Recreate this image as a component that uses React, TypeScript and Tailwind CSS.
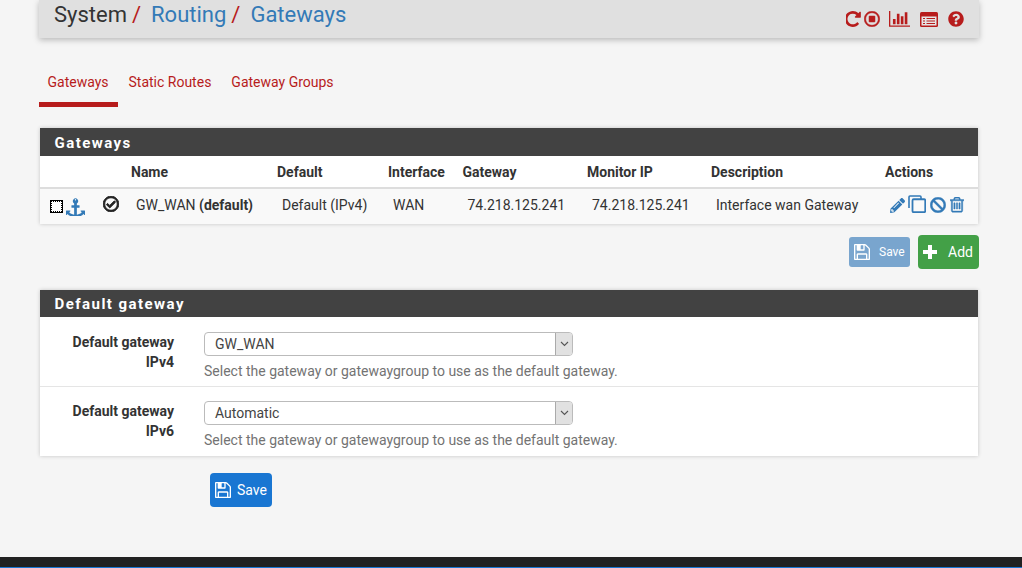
import { FaBan, FaPencilAlt, FaQuestionCircle, FaRegCheckCircle, FaRegStopCircle } from "react-icons/fa";

const cols = "grid grid-cols-[91px_146px_111px_74.5px_124.5px_124px_174px_94px]";

function RepeatIcon() {
  return (
    <svg width="15" height="16" viewBox="128 128 1408 1536" fill="currentColor">
      <path d="M1536 256v448q0 26-19 45t-45 19h-448q-42 0-59-40-17-39 14-69l138-138q-148-137-349-137-104 0-198.5 40.5t-163.5 109.5-109.5 163.5-40.5 198.5 40.5 198.5 109.5 163.5 163.5 109.5 198.5 40.5q119 0 225-52t179-147q7-10 23-12 15 0 25 9l137 138q9 8 9.5 20.5t-7.5 22.5q-109 132-264 204.5t-327 72.5q-156 0-298-61t-245-164-164-245-61-298 61-298 164-245 245-164 298-61q147 0 284.5 55.5t244.5 156.5l130-129q29-31 70-14 39 17 39 59z" />
    </svg>
  );
}

function AnchorIcon() {
  return (
    <svg width="19" height="19" viewBox="0 0 1792 1792" fill="currentColor" className="ml-[3px] text-[#337ab7]">
      <path d="M960 256q0-26-19-45t-45-19-45 19-19 45 19 45 45 19 45-19 19-45zm832 1056v352q0 22-20 30-8 2-12 2-12 0-23-9l-93-93q-119 143-318.5 226.5t-429.5 83.5-429.5-83.5-318.5-226.5l-93 93q-9 9-23 9-4 0-12-2-20-8-20-30v-352q0-14 9-23t23-9h352q22 0 30 20 8 19-7 35l-100 100q67 91 189.5 153.5t271.5 82.5v-647h-192q-26 0-45-19t-19-45v-128q0-26 19-45t45-19h192v-163q-58-34-93-92.5t-35-128.5q0-106 75-181t181-75 181 75 75 181q0 70-35 128.5t-93 92.5v163h192q26 0 45 19t19 45v128q0 26-19 45t-45 19h-192v647q149-20 271.5-82.5t189.5-153.5l-100-100q-15-16-7-35 8-20 30-20h352q14 0 23 9t9 23z" />
    </svg>
  );
}

function SaveIcon({ size }: { size: number }) {
  return (
    <svg width={size} height={size} viewBox="128 128 1536 1536" fill="currentColor">
      <path d="M512 1536h768v-384h-768v384zm896 0h128v-896q0-14-10-38.5t-20-34.5l-281-281q-10-10-34-20t-39-10v416q0 40-28 68t-68 28h-576q-40 0-68-28t-28-68v-416h-128v1280h128v-416q0-40 28-68t68-28h832q40 0 68 28t28 68v416zm-384-928v-320q0-13-9.5-22.5t-22.5-9.5h-192q-13 0-22.5 9.5t-9.5 22.5v320q0 13 9.5 22.5t22.5 9.5h192q13 0 22.5-9.5t9.5-22.5zm640 32v928q0 40-28 68t-68 28h-1344q-40 0-68-28t-28-68v-1344q0-40 28-68t68-28h928q40 0 88 20t76 48l280 280q28 28 48 76t20 88z" />
    </svg>
  );
}

function TrashIcon() {
  return (
    <svg width="14" height="15.3" viewBox="192 128 1408 1536" fill="currentColor" stroke="currentColor" strokeWidth="40" className="ml-[4px]">
      <path d="M704 736v576q0 14-9 23t-23 9h-64q-14 0-23-9t-9-23v-576q0-14 9-23t23-9h64q14 0 23 9t9 23zm256 0v576q0 14-9 23t-23 9h-64q-14 0-23-9t-9-23v-576q0-14 9-23t23-9h64q14 0 23 9t9 23zm256 0v576q0 14-9 23t-23 9h-64q-14 0-23-9t-9-23v-576q0-14 9-23t23-9h64q14 0 23 9t9 23zm128 724v-948h-896v948q0 22 7 40.5t14.5 27 10.5 8.5h832q3 0 10.5-8.5t14.5-27 7-40.5zm-672-1076h448l-48-117q-7-9-17-11h-317q-10 2-17 11zm928 32v64q0 14-9 23t-23 9h-96v948q0 83-47 143.5t-113 60.5h-832q-66 0-113-58.5t-47-141.5v-952h-96q-14 0-23-9t-9-23v-64q0-14 9-23t23-9h309l70-167q15-37 54-63t79-26h320q40 0 79 26t54 63l70 167h309q14 0 23 9t9 23z" />
    </svg>
  );
}

function BarChartIcon() {
  return (
    <svg width="21" height="15.75" viewBox="0 128 2048 1536" fill="currentColor" className="ml-[9px]">
      <path d="M640 896v512h-256v-512h256zm384-512v1024h-256v-1024h256zm1024 1152v128h-2048v-1536h128v1408h1920zm-640-896v768h-256v-768h256zm384-384v1152h-256v-1152h256z" />
    </svg>
  );
}

function ListAltIcon() {
  return (
    <svg width="18" height="15" viewBox="0 0 18 15" className="ml-[10px]">
      <rect x="0" y="0" width="18" height="15" rx="1.5" fill="currentColor" />
      <rect x="1.5" y="4.5" width="15" height="9" fill="#e6e6e6" />
      <path d="M3 6.5h2M3 9h2M3 11.5h2M6.5 6.5h8.5M6.5 9h8.5M6.5 11.5h8.5" stroke="currentColor" strokeWidth="1.2" />
    </svg>
  );
}

function CloneIcon() {
  return (
    <svg width="18" height="18" viewBox="0 0 18 18" className="ml-[3px] -translate-y-[1px]">
      <path d="M1 13V2a1 1 0 0 1 1-1h10a1 1 0 0 1 1 1v2" fill="none" stroke="currentColor" strokeWidth="1.6" />
      <rect x="4.5" y="4.25" width="12.75" height="13" rx="1.2" fill="#f9f9f9" stroke="currentColor" strokeWidth="1.8" />
    </svg>
  );
}

function PlusIcon() {
  return (
    <svg width="14" height="14" viewBox="0 0 14 14" fill="currentColor">
      <path d="M5 0h4v5h5v4H9v5H5V9H0V5h5z" />
    </svg>
  );
}

function Select({ value }: { value: string }) {
  return (
    <div className="flex h-[24px] w-[369px] items-center justify-between rounded-[4px] border border-[#bbb] bg-white">
      <span className="pl-[10px] pt-[1px] text-[14px] text-[#444]">{value}</span>
      <span className="flex h-full w-[17px] items-center justify-center rounded-r-[3px] border-l border-[#aaa] bg-[#e1e1e1]">
        <svg width="9" height="6" viewBox="0 0 9 6" fill="none" stroke="#555" strokeWidth="1.1"><path d="M1 1l3.5 3.5L8 1" /></svg>
      </span>
    </div>
  );
}

function GatewayField({ value, last }: { value: string; last?: boolean }) {
  return (
    <div className={`flex h-[69px] ${last ? "" : "border-b border-[#e5e5e5]"}`}>
      <div className="w-[134px] pt-[14px] text-right text-[14px] leading-[20px] font-bold text-[#333]">
        Default gateway<br />{value === "GW_WAN" ? "IPv4" : "IPv6"}
      </div>
      <div className="pl-[30px] pt-[14px]">
        <Select value={value} />
        <p className="mt-[5px] text-[14px] leading-[20px] text-[#737373]">Select the gateway or gatewaygroup to use as the default gateway.</p>
      </div>
    </div>
  );
}

export default function App() {
  return (
    <div className="flex h-[568px] flex-col overflow-hidden bg-[#f5f5f5] font-['Roboto',sans-serif] text-[#333]">
      <div className="ml-[39px] flex h-[38px] w-[940px] items-center justify-between bg-[#e0e0e0] pl-[15px] pr-[15px] shadow-[0_2px_6px_rgba(0,0,0,0.25)]">
        <div className="flex h-full items-start pt-[2px] text-[22px] leading-[26px]">
          <span>System</span>
          <span className="ml-[5px] text-[#b71c1c]">/</span>
          <span className="ml-[10px] text-[#337ab7]">Routing</span>
          <span className="ml-[5px] text-[#b71c1c]">/</span>
          <span className="ml-[10px] text-[#337ab7]">Gateways</span>
        </div>
        <div className="flex items-center text-[#b71c1c]">
          <RepeatIcon />
          <FaRegStopCircle size={16} strokeWidth={16} className="ml-[3px]" />
          <BarChartIcon />
          <ListAltIcon />
          <FaQuestionCircle size={16} className="ml-[10px]" />
        </div>
      </div>

      <div className="ml-[39px] mt-[26px] flex h-[43px] text-[14px] text-[#b71c1c]">
        <div className="h-full w-[79px] border-b-[5px] border-[#b71c1c] pl-[8.5px] pt-[8px]">Gateways</div>
        <div className="ml-[10.5px] pt-[8px]">Static Routes</div>
        <div className="ml-[20px] pt-[8px]">Gateway Groups</div>
      </div>

      <div className="ml-[40px] mt-[21px] w-[938px] bg-white shadow-[0_0_4px_rgba(0,0,0,0.2)]">
        <div className="flex h-[28px] items-center bg-[#424242] pl-[14.5px] pt-[2px] text-[15px] font-bold tracking-[1.45px] text-white">Gateways</div>
        <div className={`${cols} h-[33px] items-center border-b-[2px] border-[#ddd] pt-[1px] text-[14px] font-bold`}>
          <div />
          <div>Name</div>
          <div>Default</div>
          <div>Interface</div>
          <div>Gateway</div>
          <div>Monitor IP</div>
          <div>Description</div>
          <div>Actions</div>
        </div>
        <div className={`${cols} h-[35px] items-center bg-[#f9f9f9] text-[14px]`}>
          <div className="flex items-center pl-[10px]">
            <span className="h-[13px] w-[13px] border border-black bg-white">
              <span className="block h-full w-full border border-dotted border-black" />
            </span>
            <AnchorIcon />
            <FaRegCheckCircle size={16} strokeWidth={32} className="ml-[18px] -translate-y-[3px] text-[#222]" />
          </div>
          <div className="pb-[2px] pl-[5px]">GW_WAN <b>(default)</b></div>
          <div className="pb-[2px] pl-[5px]">Default (IPv4)</div>
          <div className="pb-[2px] pl-[5px]">WAN</div>
          <div className="pb-[2px] pl-[5px]">74.218.125.241</div>
          <div className="pb-[2px] pl-[5px]">74.218.125.241</div>
          <div className="pb-[2px] pl-[5px]">Interface wan Gateway</div>
          <div className="flex items-center pb-[3px] pl-[5px] text-[#337ab7]">
            <FaPencilAlt size={15} />
            <CloneIcon />
            <FaBan size={16} strokeWidth={14} className="ml-[4px]" />
            <TrashIcon />
          </div>
        </div>
      </div>

      <div className="ml-[849px] mt-[11px] flex w-[130px] items-center">
        <div className="flex h-[30px] w-[61px] items-center rounded-[3px] bg-[#79a5ce] pl-[5px] text-[12px] text-white">
          <SaveIcon size={16} />
          <span className="ml-[9px]">Save</span>
        </div>
        <div className="ml-[8px] flex h-[34px] w-[61px] items-center rounded-[4px] bg-[#43a047] pl-[5px] text-[14px] text-white">
          <PlusIcon />
          <span className="ml-[11px]">Add</span>
        </div>
      </div>

      <div className="ml-[40px] mt-[21px] w-[938px] bg-white shadow-[0_0_4px_rgba(0,0,0,0.2)]">
        <div className="box-border flex h-[28px] items-center border-b border-white bg-[#424242] pl-[14.5px] pt-[1px] text-[15px] font-bold tracking-[1.45px] text-white">Default gateway</div>
        <GatewayField value="GW_WAN" />
        <GatewayField value="Automatic" last />
      </div>

      <div className="ml-[210px] mt-[17px] flex h-[34px] w-[62px] items-center rounded-[4px] bg-[#1976d2] pl-[5px] text-[14px] text-white">
        <SaveIcon size={16} />
        <span className="ml-[6px]">Save</span>
      </div>

      <div className="mt-[50px] h-[11px] shrink-0 border-b border-[#1976d2] bg-[#212121]" />
    </div>
  );
}
